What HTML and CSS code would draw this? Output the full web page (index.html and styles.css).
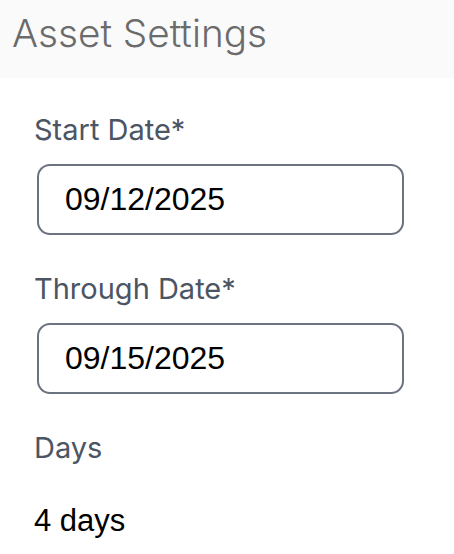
FILE: index.html
```html
<!DOCTYPE html>
<html lang="en">
<head>
<meta charset="utf-8">
<title>Asset Settings</title>
<link rel="stylesheet" href="styles.css">
</head>
<body>
  <header class="panel-header">
    <h1 class="panel-title">Asset Settings</h1>
  </header>
  <main class="panel-body">
    <div class="field">
      <label class="field-label" for="start">Start Date*</label>
      <input class="field-input" id="start" type="text" value="09/12/2025">
    </div>
    <div class="field">
      <label class="field-label" for="through">Through Date*</label>
      <input class="field-input" id="through" type="text" value="09/15/2025">
    </div>
    <div class="field field-static">
      <span class="field-label">Days</span>
      <span class="field-value">4 days</span>
    </div>
  </main>
</body>
</html>
```

FILE: styles.css
```css
* { box-sizing: border-box; }

html, body {
  margin: 0;
  padding: 0;
  background: #ffffff;
}

body {
  width: 454px;
  height: 554px;
  overflow: hidden;
  font-family: Inter, "Liberation Sans", sans-serif;
}

.panel-header {
  height: 78px;
  background: #fafafa;
  padding: 9px 0 0 12px;
}

.panel-title {
  margin: 0;
  font-family: Inter, sans-serif;
  font-weight: 300;
  font-size: 38.7px;
  line-height: 48px;
  color: #6b6b6b;
}

.panel-body {
  display: flex;
  flex-direction: column;
  gap: 37px;
  padding: 35px 0 0 34px;
}

.field {
  display: flex;
  flex-direction: column;
  align-items: flex-start;
  gap: 17px;
}

.field-static {
  gap: 38px;
}

.field-label {
  font-family: Inter, sans-serif;
  font-size: 29px;
  line-height: 34px;
  color: #4b5563;
}

.field-input {
  margin: 0 0 0 3px;
  width: 367px;
  height: 71px;
  padding: 0 26px;
  border: 2px solid #6b7280;
  border-radius: 13px;
  background: #ffffff;
  font-family: "Liberation Sans", Arial, sans-serif;
  font-size: 32px;
  color: #000000;
  outline: none;
}

.field-value {
  font-family: "Liberation Sans", Arial, sans-serif;
  font-size: 31px;
  line-height: 36px;
  color: #000000;
}
```
